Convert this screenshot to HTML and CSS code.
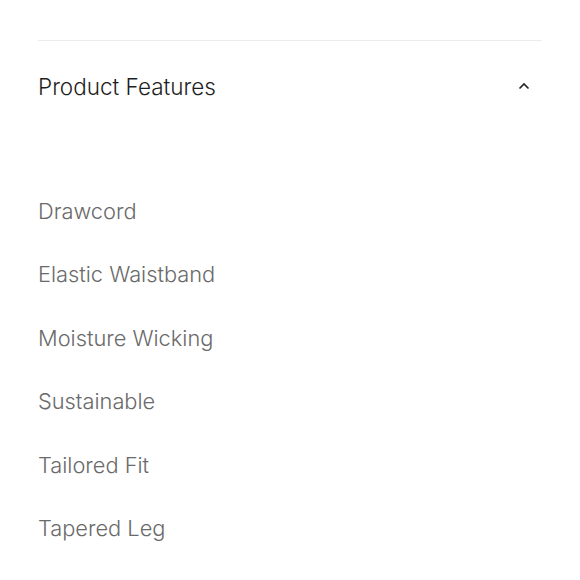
FILE: index.html
```html
<!DOCTYPE html>
<html lang="en">
<head>
	<meta charset="UTF-8">
	<title>Product Features</title>
	<link rel="stylesheet" href="styles.css">
</head>
<body>
	<section class="accordion">
		<header class="accordion-head">
			<h2 class="accordion-title">Product Features</h2>
			<svg class="chevron" width="12" height="8" viewBox="0 0 12 8">
				<path d="M1.5 6.5 L6 2 L10.5 6.5" fill="none" stroke="#222" stroke-width="1.6"/>
			</svg>
		</header>
		<ul class="features">
			<li>Drawcord</li>
			<li>Elastic Waistband</li>
			<li>Moisture Wicking</li>
			<li>Sustainable</li>
			<li>Tailored Fit</li>
			<li>Tapered Leg</li>
		</ul>
	</section>
</body>
</html>
```

FILE: styles.css
```css
* {
	margin:0;
	padding:0;
}
html,body {
	background:#fff;
}
body {
	font-family:Inter, "Liberation Sans", sans-serif;
	padding:40px 38px 0;
}
ul {
	list-style:none;
}
.accordion {
	border-top:1px solid #ececec;
}
.accordion-head {
	display:flex;
	align-items:center;
	justify-content:space-between;
	height:90px;
}
.accordion-title {
	font-size:22.5px;
	font-weight:300;
	color:#1e1e1e;
}
.chevron {
	margin-right:12px;
}
.features {
	padding-top:49px;
}
.features li {
	font-size:21.8px;
	font-weight:300;
	line-height:63.4px;
	color:#6a6a6a;
}
```
